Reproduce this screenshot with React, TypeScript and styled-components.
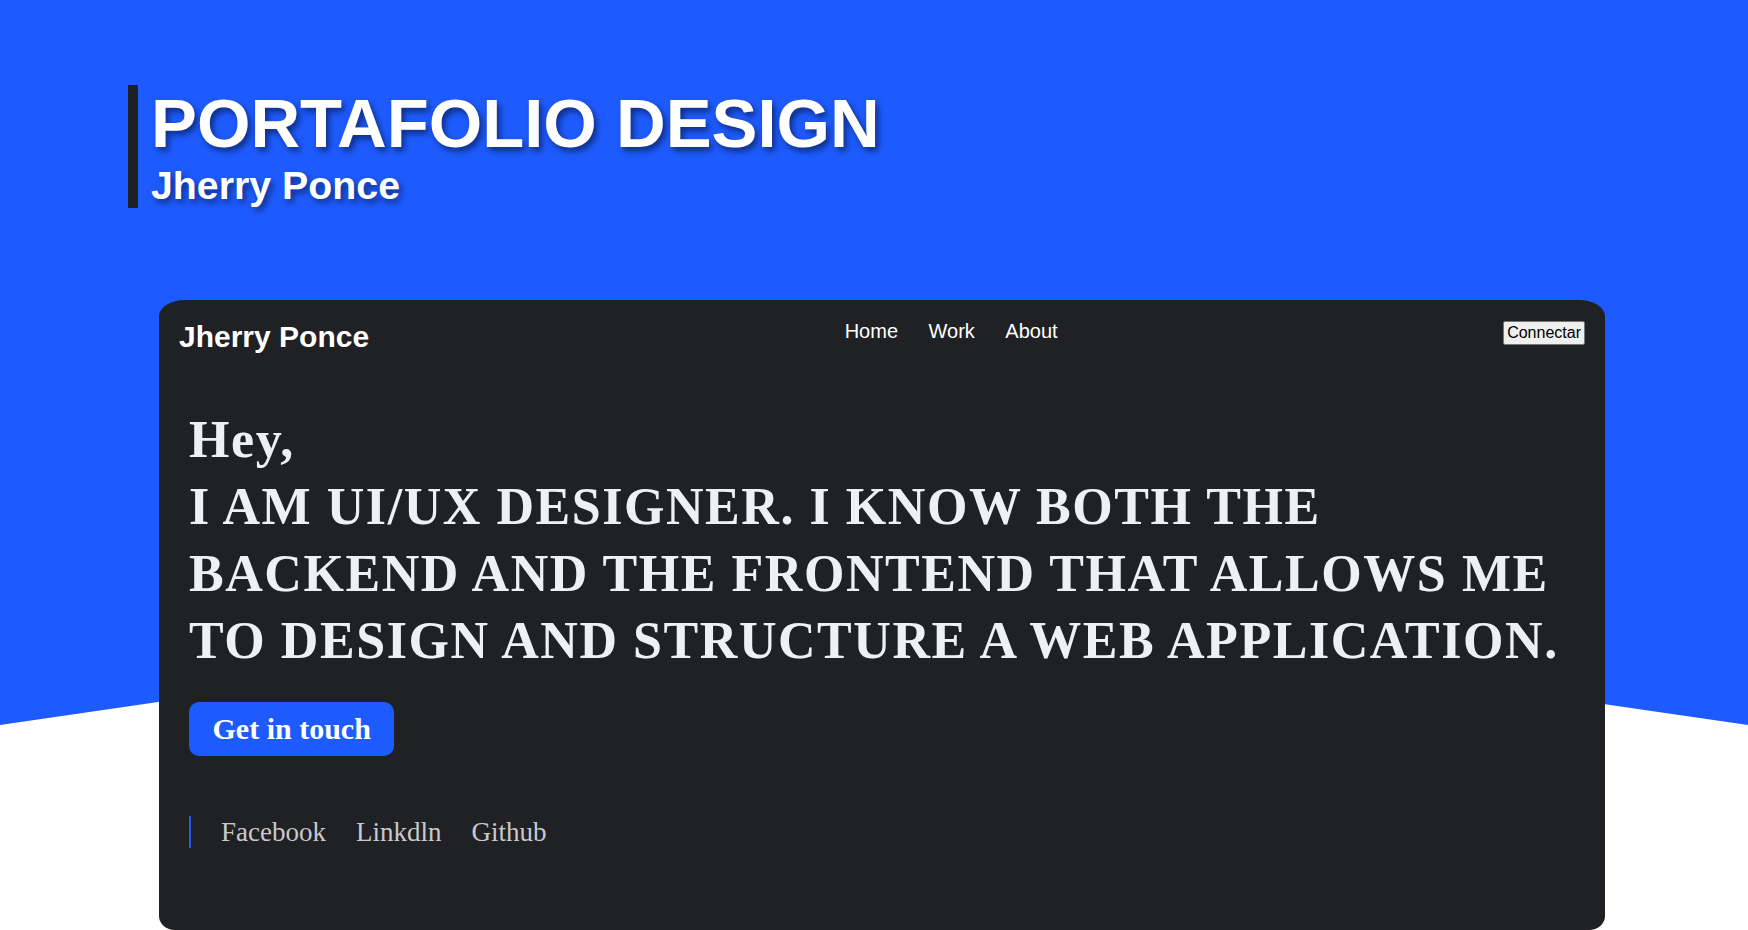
import React from "react";
import styled, { createGlobalStyle } from "styled-components";

const GlobalStyle = createGlobalStyle`
  html, body {
    margin: 0;
    padding: 0;
    background: #ffffff;
  }
  * { box-sizing: border-box; }
`;

const Page = styled.div`
  position: relative;
  min-height: 930px;
  overflow: hidden;
  padding-top: 85px;
  font-family: "Liberation Sans", Arial, sans-serif;

  &::before {
    content: "";
    position: absolute;
    inset: 0;
    background: #1e5bff;
    clip-path: polygon(0 0, 100% 0, 100% 725px, 50% 598px, 0 725px);
    z-index: 0;
  }
`;

const Header = styled.header`
  position: relative;
  z-index: 1;
  margin-left: 128px;
  border-left: 10px solid #1f2024;
  padding-left: 13px;
  width: max-content;
`;

const Title = styled.h1`
  margin: 0;
  font-family: "Liberation Sans", Arial, sans-serif;
  font-weight: 700;
  font-size: 68.8px;
  line-height: 77px;
  color: #ffffff;
  text-shadow: 3px 4px 6px rgba(0, 0, 0, 0.5);
`;

const Subtitle = styled.h2`
  margin: 0;
  font-family: "Liberation Sans", Arial, sans-serif;
  font-weight: 700;
  font-size: 39.3px;
  line-height: 46px;
  color: #ffffff;
  text-shadow: 3px 4px 6px rgba(0, 0, 0, 0.5);
`;

const Card = styled.section`
  position: relative;
  z-index: 1;
  margin: 92px 0 0 159px;
  width: 1446px;
  height: 630px;
  background: #202124;
  border-radius: 26px 26px 16px 16px / 16px 16px 14px 14px;
  display: flex;
  flex-direction: column;
`;

const Nav = styled.nav`
  display: flex;
  justify-content: space-between;
  align-items: flex-start;
  padding: 20px;
`;

const Logo = styled.div`
  font-family: "Liberation Sans", Arial, sans-serif;
  font-weight: 700;
  font-size: 30px;
  color: #ffffff;
`;

const Links = styled.ul`
  list-style: none;
  margin: 0;
  padding: 0 0 0 30px;
  display: flex;
  gap: 30.5px;
`;

const NavLink = styled.li`
  font-family: "Liberation Sans", Arial, sans-serif;
  font-size: 20px;
  line-height: 23px;
  color: #ffffff;
`;

const ConnectButton = styled.button`
  margin-top: 1px;
  font-family: "Liberation Sans", Arial, sans-serif;
  font-size: 16px;
  line-height: 20px;
  padding: 1px 3px;
  color: #000000;
  background: #efefef;
  border: 1px solid #767676;
  border-radius: 2px;
`;

const Hero = styled.div`
  padding: 0 30px;
`;

const Headline = styled.h1`
  margin: 32px 0 0;
  font-family: "Liberation Serif", "Times New Roman", serif;
  font-weight: 700;
  font-size: 52px;
  line-height: 67px;
  letter-spacing: 1.55px;
  color: #eff0f4;
  text-transform: uppercase;
`;

const Greeting = styled.span`
  text-transform: none;
`;

const CTA = styled.button`
  margin-top: 28px;
  font-family: "Liberation Serif", "Times New Roman", serif;
  font-weight: 700;
  font-size: 30px;
  line-height: 34.5px;
  padding: 9.5px 23.5px;
  color: #ffffff;
  background: #1e5bff;
  border: none;
  border-radius: 10px;
`;

const Socials = styled.div`
  margin-top: 60px;
  border-left: 2px solid #2a5be6;
  display: flex;
  width: max-content;
`;

const SocialLink = styled.a`
  margin-left: 30px;
  font-family: "Liberation Serif", "Times New Roman", serif;
  font-size: 27px;
  line-height: 32px;
  color: #c9c9cc;
  text-decoration: none;
`;

export default function App() {
  return (
    <>
      <GlobalStyle />
      <Page>
        <Header>
          <Title>PORTAFOLIO DESIGN</Title>
          <Subtitle>Jherry Ponce</Subtitle>
        </Header>
        <Card>
          <Nav>
            <Logo>Jherry Ponce</Logo>
            <Links>
              <NavLink>Home</NavLink>
              <NavLink>Work</NavLink>
              <NavLink>About</NavLink>
            </Links>
            <ConnectButton>Connectar</ConnectButton>
          </Nav>
          <Hero>
            <Headline>
              <Greeting>Hey,</Greeting>
              <br />
              I am UI/UX designer. I know both the backend and the frontend that allows me to design and structure a web application.
            </Headline>
            <CTA>Get in touch</CTA>
            <Socials>
              <SocialLink href="#">Facebook</SocialLink>
              <SocialLink href="#">Linkdln</SocialLink>
              <SocialLink href="#">Github</SocialLink>
            </Socials>
          </Hero>
        </Card>
      </Page>
    </>
  );
}
